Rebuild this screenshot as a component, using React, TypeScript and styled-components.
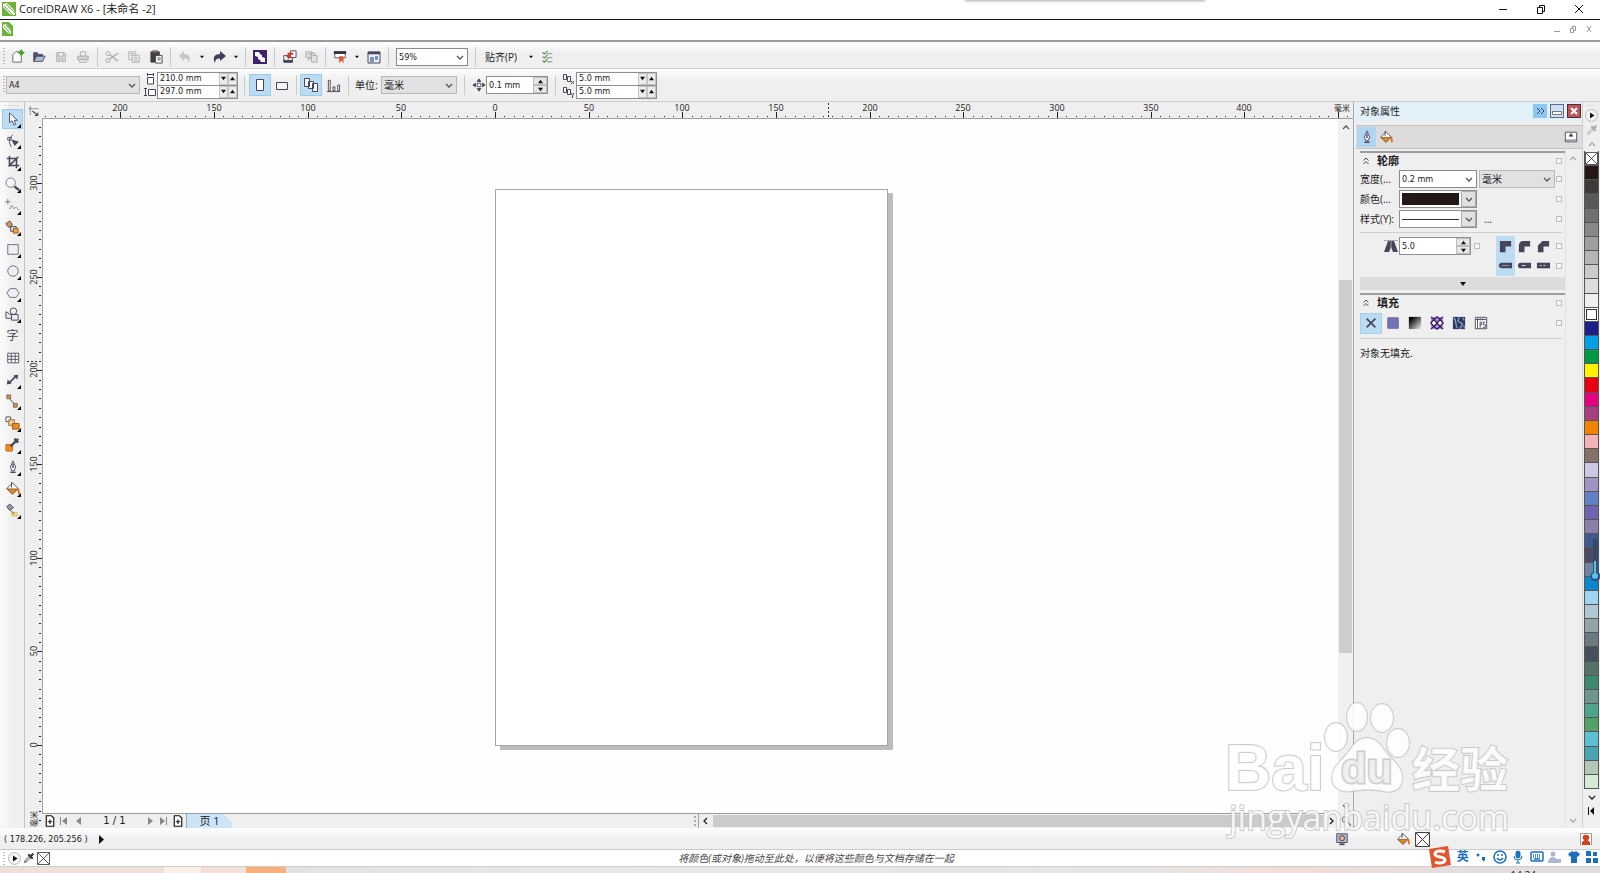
import React from 'react';
import styled, { createGlobalStyle, css } from 'styled-components';

const LATIN = '"DejaVu Sans Condensed", "DejaVu Sans", "Noto Sans CJK SC", sans-serif';
const CJK = '"Open Sans", "Noto Sans CJK SC", sans-serif';

const INK = '#46465a';
const BLUE = '#bcdcf4';

const GlobalStyle = createGlobalStyle`
  * { box-sizing: border-box; }
  body { margin: 0; background: #efefef; color: #1c1c1c; font: 10px/14px ${CJK}; }
  button, input, select { font: inherit; color: inherit; margin: 0; padding: 0; border: 0; background: none; border-radius: 0; outline: none; }
  svg { display: block; flex: none; }
  h2, h3, p { margin: 0; font: inherit; }
`;

/* ---------- layout ---------- */

const Shell = styled.div`
  position: relative;
  display: flex;
  flex-direction: column;
  height: 100vh;
  overflow: hidden;
`;

const TitleBar = styled.header`
  display: flex;
  align-items: center;
  gap: 3px;
  height: 20px;
  padding: 0 16px 2px 2px;
  background: #fff;
  border-bottom: 1px solid #15151a;
  font-size: 11px;
`;

const MenuBar = styled.div`
  display: flex;
  align-items: center;
  height: 22px;
  padding: 0 7px 2px 2px;
  background: #fff;
  border-bottom: 2px solid #9a9a9a;
`;

const Spacer = styled.div`
  flex: 1;
`;

const WindowButtons = styled.div<{ $gap: number }>`
  display: flex;
  align-items: center;
  gap: ${(p) => p.$gap}px;
`;

const PlainButton = styled.button`
  display: flex;
  align-items: center;
  justify-content: center;
`;

const Toolbar = styled.div<{ $height: number; $drop?: number }>`
  display: flex;
  align-items: center;
  height: ${(p) => p.$height}px;
  padding: ${(p) => p.$drop ?? 0}px 0 0 3px;
  background: linear-gradient(#fdfdfd, #efefef 12px);
  border-bottom: 1px solid #cfcfcf;
`;

const Grip = styled.div`
  width: 3px;
  height: 18px;
  background: repeating-linear-gradient(#b5b5b5 0 1px, transparent 1px 3px);
  background-size: 2px 100%;
  background-repeat: no-repeat;
`;

const Divider = styled.div<{ $space?: number; $after?: number }>`
  width: 1px;
  height: 20px;
  margin: 0 ${(p) => p.$after ?? p.$space ?? 3}px 0 ${(p) => p.$space ?? 3}px;
  background: #cbcbcb;
`;

const ToolButton = styled.button<{ $on?: boolean; $dim?: boolean }>`
  display: flex;
  align-items: center;
  justify-content: center;
  width: 22px;
  height: 22px;
  background: ${(p) => (p.$on ? BLUE : 'transparent')};
  border: 1px solid ${(p) => (p.$on ? '#9dcbee' : 'transparent')};
  ${(p) => p.$dim && css`opacity: 0.4;`}
`;

const CaretButton = styled.button`
  display: flex;
  align-items: center;
  justify-content: center;
  width: 12px;
  height: 22px;
`;

const SnapButton = styled(PlainButton)`
  padding-right: 8px;
`;

const SelectWrap = styled.span<{ $width: number; $plain?: boolean; $face?: 'latin' | 'cjk' }>`
  display: flex;
  align-items: center;
  position: relative;
  width: ${(p) => p.$width}px;
  height: 18px;
  flex: none;
  background: ${(p) => (p.$plain ? '#fff' : '#e1e1e1')};
  border: 1px solid ${(p) => (p.$plain ? '#8a8a8a' : '#b9b9b9')};
  font-family: ${(p) => (p.$face === 'cjk' ? CJK : LATIN)};
  font-size: ${(p) => (p.$face === 'cjk' ? 10 : 9)}px;
  select { width: 100%; height: 16px; padding-left: 2px; appearance: none; }
  svg { position: absolute; right: 3px; pointer-events: none; }
`;

const FieldLabel = styled.label<{ $width?: number }>`
  width: ${(p) => (p.$width ? `${p.$width}px` : 'auto')};
  white-space: nowrap;
`;

const PairGrid = styled.div<{ $indent?: number }>`
  display: grid;
  grid-template-columns: 13px 81px;
  grid-auto-rows: 13px;
  align-items: center;
  margin-left: ${(p) => p.$indent ?? 0}px;
`;

const PairField = styled.div`
  display: flex;
  align-items: center;
  height: 14px;
  background: #fff;
  border: 1px solid #8f8f8f;
  font: 9px/11px ${LATIN};
  input { flex: 1; min-width: 0; height: 11px; padding-left: 2px; }
`;

const TinyStep = styled.button`
  display: flex;
  align-items: center;
  justify-content: center;
  width: 9px;
  height: 12px;
  background: #ececec;
  border: 1px solid #c4c4c4;
`;

const StepField = styled.div<{ $width: number }>`
  display: flex;
  align-items: center;
  width: ${(p) => p.$width}px;
  height: 18px;
  flex: none;
  background: #fff;
  border: 1px solid #8f8f8f;
  font: 9px/14px ${LATIN};
  input { flex: 1; min-width: 0; height: 16px; padding-left: 2px; }
`;

const StepStack = styled.div`
  display: grid;
  grid-template-rows: 8px 8px;
  width: 14px;
  button { display: flex; align-items: center; justify-content: center; background: #e6e6e6; border: 1px solid #bdbdbd; }
`;

const Body = styled.main`
  display: flex;
  flex: 1;
  min-height: 0;
`;

const Toolbox = styled.nav`
  width: 25px;
  flex: none;
  padding-top: 3px;
  background: linear-gradient(90deg, #fafafa, #efefef 14px);
  border-right: 1px solid #c3c3c3;
`;

const ToolboxGrip = styled.div`
  height: 3px;
  margin: 0 5px;
  background: repeating-linear-gradient(90deg, #bbb 0 1px, transparent 1px 3px);
  background-size: 100% 1px;
  background-repeat: no-repeat;
`;

const ToolList = styled.div`
  display: grid;
  grid-auto-rows: minmax(0, 1fr);
  height: 413px;
`;

const ToolItem = styled.button<{ $on?: boolean; $fly?: boolean }>`
  position: relative;
  display: flex;
  align-items: center;
  justify-content: center;
  margin: 1px 1px 1px 2px;
  background: ${(p) => (p.$on ? BLUE : 'transparent')};
  border: 1px solid ${(p) => (p.$on ? '#9dcbee' : 'transparent')};
  font: 12px/14px ${CJK};
  color: ${INK};
  ${(p) =>
    p.$fly &&
    css`
      &::after {
        content: '';
        position: absolute;
        right: 1px;
        bottom: 0;
        border: 2px solid #000;
        border-left-color: transparent;
        border-top-color: transparent;
      }
    `}
`;

const Workspace = styled.section`
  display: grid;
  flex: 1;
  min-width: 0;
  grid-template-columns: 17px minmax(0, 1fr) 15px;
  grid-template-rows: 17px minmax(0, 1fr) 14px;
`;

const RulerTop = styled.div`
  grid-column: 2 / 4;
  overflow: hidden;
`;

const RulerLeft = styled.div`
  grid-row: 2 / 4;
  overflow: hidden;
`;

const Corner = styled.div`
  display: flex;
  align-items: center;
  justify-content: center;
`;

const Canvas = styled.div`
  position: relative;
  background: #fefefe;
  border-bottom: 1px solid #9c9c9c;
  border-left: 1px solid #a5a5a5;
  overflow: hidden;
`;

const Sheet = styled.div`
  position: absolute;
  left: 452px;
  top: 70px;
  width: 393px;
  height: 557px;
  background: #fff;
  border: 1px solid #a6a6a6;
  box-shadow: 5px 4px 0 #bdbdbd;
`;

const VScroll = styled.div`
  display: flex;
  flex-direction: column;
  align-items: center;
  background: #f0f0f0;
  padding: 4px 0;
`;

const VThumb = styled.div`
  flex: 371;
  width: 13px;
  background: #cdcdcd;
`;

const Gap = styled.div<{ $grow: number }>`
  flex: ${(p) => p.$grow};
`;

const PageBar = styled.div`
  display: flex;
  align-items: center;
  min-width: 0;
  padding-left: 1px;
`;

const PageNav = styled.div`
  display: flex;
  align-items: center;
  width: 656px;
  height: 14px;
  flex: none;
  border-right: 1px solid #a0a0a0;
`;

const NavButton = styled.button<{ $width: number }>`
  display: flex;
  align-items: center;
  justify-content: center;
  width: ${(p) => p.$width}px;
  height: 14px;
`;

const PageCount = styled.span`
  width: 57px;
  text-align: center;
  font: 10px/14px "DejaVu Sans", sans-serif;
`;

const PageTab = styled.button`
  width: 46px;
  height: 14px;
  margin-left: 1px;
  background: #cce4f7;
  border-left: 1px solid #9ab;
  clip-path: polygon(0 0, 38px 0, 100% 9px, 100% 100%, 0 100%);
  font: 11px/12px ${CJK};
  text-align: center;
`;

const HScroll = styled.div`
  display: flex;
  align-items: center;
  flex: 1;
  height: 14px;
`;

const HThumb = styled.div`
  flex: 1;
  height: 12px;
  background: #cbcbcb;
`;

/* ---------- docker ---------- */

const Docker = styled.aside`
  display: flex;
  flex-direction: column;
  width: 230px;
  flex: none;
  border-left: 1px solid #a8a8a8;
  border-right: 1px solid #d0d0d0;
  padding-left: 2px;
`;

const DockerTitle = styled.div`
  display: flex;
  align-items: center;
  gap: 3px;
  height: 19px;
  padding: 0 1px 1px 4px;
  background: #e2f0fa;
`;

const DockerButton = styled.button<{ $tone: string; $edge: string }>`
  display: flex;
  align-items: center;
  justify-content: center;
  width: 14px;
  height: 14px;
  background: ${(p) => p.$tone};
  border: 1px solid ${(p) => p.$edge};
`;

const DockerTabs = styled.div`
  display: flex;
  align-items: center;
  height: 24px;
  margin-top: 4px;
  padding: 0 4px 0 1px;
  background: #dcdcdc;
  border-top: 1px solid #c2c2c2;
  border-bottom: 1px solid #c2c2c2;
`;

const DockerTab = styled.button<{ $on?: boolean }>`
  display: flex;
  align-items: center;
  justify-content: center;
  width: 19px;
  height: 20px;
  background: ${(p) => (p.$on ? '#afd5f2' : 'transparent')};
`;

const DockerMain = styled.div`
  display: flex;
  flex: 1;
  min-height: 0;
`;

const DockerContent = styled.div`
  flex: 1;
  min-width: 0;
  padding: 2px 0 0 4px;
  border-right: 1px solid #e2e2e2;
`;

const DockerScroll = styled.div`
  display: flex;
  flex-direction: column;
  align-items: center;
  justify-content: space-between;
  width: 16px;
  padding: 5px 2px 4px 0;
`;

const SectionHead = styled.div`
  display: flex;
  align-items: center;
  gap: 8px;
  height: 18px;
  padding: 0 3px;
  border-top: 2px solid #9d9d9d;
  h3 { flex: 1; font: bold 11px/16px ${CJK}; }
`;

const Row = styled.div<{ $height?: number }>`
  display: flex;
  align-items: center;
  height: ${(p) => p.$height ?? 20}px;
  padding-right: 3px;
`;

const UnitGap = styled.span`
  width: 2px;
`;

const MiterIndent = styled.span`
  width: 23px;
`;

const Reset = styled.button<{ $inline?: boolean }>`
  width: 6px;
  height: 6px;
  margin-left: ${(p) => (p.$inline ? '3px' : 'auto')};
  flex: none;
  border: 1px solid #bcbcbc;
  background: #f8f8f8;
`;

const PreviewSelect = styled.button`
  display: flex;
  align-items: center;
  width: 78px;
  height: 18px;
  padding-left: 2px;
  background: #fff;
  border: 1px solid #8f8f8f;
`;

const PreviewFill = styled.span`
  flex: 1;
  height: 12px;
  background: #231815;
`;

const PreviewLine = styled.span`
  flex: 1;
  height: 1px;
  background: #333;
`;

const PreviewArrow = styled.span`
  display: flex;
  align-items: center;
  justify-content: center;
  width: 15px;
  height: 16px;
  margin-left: 2px;
  background: #e1e1e1;
  border: 1px solid #adadad;
`;

const Rule = styled.div`
  height: 1px;
  margin: 3px 3px 3px 0;
  background: #cfcfcf;
`;

const JoinButton = styled.button<{ $on?: boolean }>`
  display: flex;
  align-items: center;
  justify-content: center;
  width: 19px;
  height: 20px;
  background: ${(p) => (p.$on ? BLUE : 'transparent')};
`;

const Expander = styled.button`
  display: flex;
  align-items: center;
  justify-content: center;
  width: 100%;
  height: 13px;
  margin: 2px 0 3px;
  background: #dcdcdc;
`;

const FillButton = styled.button<{ $on?: boolean }>`
  display: flex;
  align-items: center;
  justify-content: center;
  width: 22px;
  height: 21px;
  background: ${(p) => (p.$on ? BLUE : 'transparent')};
  border: 1px solid ${(p) => (p.$on ? '#a5cfee' : 'transparent')};
`;

const Note = styled.p`
  padding-top: 4px;
`;

/* ---------- colour strip ---------- */

const Strip = styled.div`
  position: relative;
  display: flex;
  flex-direction: column;
  align-items: center;
  width: 17px;
  flex: none;
  padding-top: 3px;
`;

const StripGrip = styled(ToolboxGrip)`
  width: 9px;
`;

const StripButton = styled.button<{ $height: number }>`
  display: flex;
  align-items: center;
  justify-content: center;
  width: 15px;
  height: ${(p) => p.$height}px;
`;

const Swatches = styled.div`
  display: grid;
  grid-auto-rows: minmax(0, 1fr);
  width: 15px;
  height: 638px;
  border: 1px solid #555;
  border-top: 0;
`;

const Swatch = styled.button<{ $color: string; $current?: boolean }>`
  min-height: 0;
  background: ${(p) => p.$color};
  border-top: 1px solid #555;
  ${(p) => p.$current && css`box-shadow: inset 0 0 0 1px #fff, inset 0 0 0 2px #333;`}
`;

const Thermometer = styled.svg`
  position: absolute;
  right: 0;
  top: 435px;
`;

/* ---------- bottom ---------- */

const StatusBar = styled.footer`
  display: flex;
  align-items: center;
  height: 22px;
  flex: none;
  padding: 1px 8px 0 4px;
  background: linear-gradient(#fefefe, #efefef 11px);
  border-bottom: 1px solid #cbcbcb;
  font: 9px/12px ${LATIN};
`;

const StatusIcons = styled.div`
  display: flex;
  align-items: center;
  gap: 5px;
  width: 184px;
  margin-left: 47px;
`;

const PaletteBar = styled.div`
  display: flex;
  align-items: center;
  gap: 2px;
  height: 17px;
  flex: none;
  padding: 0 20px 0 3px;
  background: #fff;
  border-bottom: 1px solid #cdcdcd;
`;

const Hint = styled.em`
  flex: 1;
  text-align: center;
  color: #444;
`;

const Taskbar = styled.div`
  display: flex;
  height: 6px;
  flex: none;
  overflow: hidden;
  background: linear-gradient(90deg, #dcdcdc, #e9e9e9 40%, #e6e4e4 72%, #f3dcd8 80%, #e3dede 92%);
`;

const Task = styled.div<{ $width: number; $color: string }>`
  width: ${(p) => p.$width}px;
  background: ${(p) => p.$color};
`;

const Clock = styled.time`
  margin-left: auto;
  margin-right: 64px;
  padding-top: 2px;
  font: 10px/12px ${CJK};
`;

const ImeBar = styled.div`
  position: absolute;
  right: 0;
  bottom: 4px;
  display: flex;
  align-items: center;
  gap: 3px;
  height: 24px;
  width: 172px;
  color: #1a6fc0;
  font: bold 12px/16px ${CJK};
`;

const ImeButton = styled.button`
  display: flex;
  align-items: center;
  justify-content: center;
  width: 16px;
  height: 18px;
`;

const TopShadow = styled.div`
  position: absolute;
  left: 60%;
  top: -6px;
  width: 238px;
  height: 6px;
  margin-left: 6px;
  box-shadow: 0 0 3px 1px #aaa;
`;

const Watermark = styled.svg`
  position: absolute;
  right: 80px;
  bottom: 30px;
  pointer-events: none;
`;

/* ---------- icons ---------- */

const Svg = ({ s = 16, children }: { s?: number; children: React.ReactNode }) => (
  <svg width={s} height={s} viewBox="0 0 16 16" fill="none" stroke={INK} strokeWidth="1">
    {children}
  </svg>
);

const Caret = ({ up, s = 5 }: { up?: boolean; s?: number }) => (
  <svg width={s} height={s} viewBox="0 0 6 6" fill="#111">
    <path d={up ? 'M0 5L3 1L6 5Z' : 'M0 1L3 5L6 1Z'} />
  </svg>
);

const Chevron = ({ dir = 'down', color = '#555', s = 8 }: { dir?: 'up' | 'down' | 'left' | 'right'; color?: string; s?: number }) => {
  const d = { down: 'M1 3L4 6L7 3', up: 'M1 6L4 3L7 6', left: 'M5 1L2 4L5 7', right: 'M3 1L6 4L3 7' }[dir];
  return (
    <svg width={s} height={s} viewBox="0 0 8 8" fill="none" stroke={color} strokeWidth="1.3">
      <path d={d} />
    </svg>
  );
};

const Collapse = () => (
  <svg width="6" height="8" fill="none" stroke={INK}>
    <path d="M.5 3.500L3 1L5.500 3.500M.5 7L3 4.500L5.500 7" />
  </svg>
);

const Logo = ({ doc }: { doc?: boolean }) => (
  <svg width={doc ? 11 : 14} height={14} viewBox={doc ? '0 0 11 14' : '0 0 14 14'}>
    <path d={doc ? 'M0 0H7L11 4V14H0Z' : 'M0 0H14V14H0Z'} fill="#6db33a" />
    <path d={doc ? 'M1 3L4 2L9 8L9 12L6 11L1 6Z' : 'M1 2L5 1L12 8L13 13L8 12L1 5Z'} fill="#fff" />
    <path d={doc ? 'M2 4L8 11M4 3L9 9' : 'M2 4L10 12M4 2L12 10'} stroke="#6db33a" strokeWidth="1" />
  </svg>
);

const Bucket = ({ s = 16 }: { s?: number }) => (
  <Svg s={s}>
    <path d="M2 8L8 2L14 8L8 14Z" fill="#fff" />
    <path d="M2 8.500H13.500L8 14Z" fill="#d98a2b" stroke="#9a5f1c" />
    <path d="M7 1V7" />
    <path d="M14 8L15 14" stroke="#e06a1c" strokeWidth="2" />
  </Svg>
);

const Nib = ({ s = 16 }: { s?: number }) => (
  <Svg s={s}>
    <path d="M8 1L5 8L6.500 12H9.500L11 8Z" fill="#f4f4f8" />
    <path d="M8 4V9M5 14H11" strokeWidth="1.500" />
  </Svg>
);

const Dropper = ({ s = 14, color = '#333' }: { s?: number; color?: string }) => (
  <Svg s={s}>
    <path d="M2 14L3 11L8 6L10 8L5 13Z" fill="#ddd" stroke={color} />
    <path d="M8 4L12 8M10 6L13 3" stroke={color} strokeWidth="3" strokeLinecap="round" />
  </Svg>
);

const CrossBox = ({ s = 14 }: { s?: number }) => (
  <svg width={s} height={s} viewBox="0 0 14 14" fill="#fff" stroke="#333" strokeWidth=".9">
    <path d="M.5 .5H13.500V13.500H.5Z" />
    <path d="M1 1L13 13M13 1L1 13" />
  </svg>
);

const PlayDisc = () => (
  <svg width="13" height="13" viewBox="0 0 13 13">
    <circle cx="6.500" cy="6.500" r="6" fill="#f4f4f4" stroke="#bbb" />
    <path d="M5 3.500L9.500 6.500L5 9.500Z" fill="#111" />
  </svg>
);

const icons = {
  new: (
    <Svg s={15}>
      <path d="M3 14V6L6 3H12V14Z" fill="#fff" stroke="#66667a" />
      <path d="M12 0L13.500 2.500L16 4L13.500 5.500L12 8L10.500 5.500L8 4L10.500 2.500Z" fill="#4aa02c" stroke="none" />
    </Svg>
  ),
  open: (
    <Svg s={14}>
      <path d="M2 13V3H6L7 5H12V8" fill="#4d5578" />
      <path d="M2 13L5 7H15L12 13Z" fill="#a9bcd8" />
    </Svg>
  ),
  save: (
    <Svg s={14}>
      <path d="M3 3H12L13 4V13H3Z" fill="#bbb" />
      <path d="M5 3H11V7H5ZM6 10H10V13H6Z" fill="#eee" />
    </Svg>
  ),
  print: (
    <Svg s={14}>
      <path d="M5 2H11V7H5Z" fill="#eee" />
      <path d="M2 7H14V11H2Z" fill="#aaa" />
      <path d="M4 11H12V14H4Z" fill="#eee" />
    </Svg>
  ),
  cut: (
    <Svg>
      <circle cx="4" cy="4.500" r="2" />
      <circle cx="4" cy="11.500" r="2" />
      <path d="M6 6L14 12M6 10L14 4" strokeWidth="1.500" />
    </Svg>
  ),
  copy: (
    <Svg s={14}>
      <path d="M2 2H10V11H2ZM4 4H8M4 6H8" fill="#eee" />
      <path d="M6 6H14V14H6ZM8 8.500H12M8 10.500H12M8 12.500H12" fill="#eee" />
    </Svg>
  ),
  paste: (
    <Svg s={15}>
      <path d="M2 3H11V14H2Z" fill="#4a3c36" />
      <path d="M4 2H9V4H4Z" fill="#c99b62" />
      <path d="M7 7H14V15H7ZM9 9.500H12.500M9 11.500H12.500" fill="#fff" />
    </Svg>
  ),
  undo: (
    <Svg>
      <path d="M7 2V5C11 5 14 7 12 14C11 10 10 9.500 7 9.500V12L2 7Z" fill="#8a8a98" stroke="none" />
    </Svg>
  ),
  redo: (
    <Svg>
      <path d="M9 2V5C4 5 1 8 4 14C4.500 10 6 9.500 9 9.500V12L15 7Z" fill="#3d4257" stroke="none" />
    </Svg>
  ),
  launch: (
    <Svg>
      <path d="M1 1H15V15H1Z" fill="#43226d" stroke="none" />
      <path d="M3 3H7L8 5L10 6L10 8L13 9V13H9L8 11L6 10V8L3 7Z" fill="#fff" stroke="none" />
      <path d="M3 8L7 12M9 3L13 7" stroke="#43226d" />
    </Svg>
  ),
  import: (
    <Svg s={15}>
      <path d="M9 2H15V9H9Z" fill="#fff" />
      <path d="M2 7H7V9H11V14H2Z" fill="#fff" />
      <path d="M2 12H11V14H2Z" fill="#3d4257" />
      <path d="M12 5H7V8" stroke="#d2342a" strokeWidth="2" />
      <path d="M4 7H10L7 11Z" fill="#d2342a" stroke="none" />
    </Svg>
  ),
  export: (
    <Svg s={15}>
      <path d="M2 3H8V9H2ZM8 7H14V14H8Z" fill="#ccc" />
      <path d="M5 6L10 4L12 6M4 12L7 9" strokeWidth="1.500" />
    </Svg>
  ),
  welcome: (
    <Svg s={14}>
      <path d="M2 2H14V9H2Z" fill="#fff" />
      <path d="M1 3H15" stroke="#2c2c3c" strokeWidth="3" />
      <path d="M7 7H12V15L9.500 12L7 15Z" fill="#e0562a" stroke="none" />
    </Svg>
  ),
  window: (
    <Svg>
      <path d="M2 3H14V14H2Z" fill="#eef" />
      <path d="M2 4H14" strokeWidth="2.500" />
      <path d="M4 8H8V13H4ZM9 7H12V11H9Z" fill="#7b94bd" stroke="none" />
    </Svg>
  ),
  checks: (
    <Svg s={13}>
      <path d="M2 3L4 5L8 1M2 8L4 10L8 6M2 13L4 15L8 11" stroke="#4b8a3c" strokeWidth="1.300" />
      <path d="M7 4.500H14M7 9.500H14M7 14.500H14" stroke="#778" />
    </Svg>
  ),
};

const tools: { name: string; on?: boolean; fly?: boolean; icon: React.ReactNode }[] = [
  { name: '选择', on: true, fly: true, icon: <Svg s={14}><path d="M4 1V12L7 10L9 15L11 14L9.500 9.500H13Z" fill="#fff" /></Svg> },
  { name: '形状', fly: true, icon: <Svg s={14}><path d="M8 1C3 4 3 9 6 15M2 4H6V7H2Z" /><path d="M7 7L14 9L10 13Z" fill={INK} /></Svg> },
  { name: '裁剪', fly: true, icon: <Svg s={14}><path d="M4 1V12H15M1 4H12V15M3 13L14 2" strokeWidth="1.800" /></Svg> },
  { name: '缩放', fly: true, icon: <Svg s={15}><circle cx="6" cy="6" r="5" fill="#f4f6fa" stroke="#77778a" /><path d="M10 10L15 14" strokeWidth="2.500" /></Svg> },
  { name: '手绘', fly: true, icon: <Svg s={15}><path d="M3 1V7M0 4H6M5 12C7 6 8 8 9 11C10 13 11 8 13 11L15 13" stroke="#77778a" /></Svg> },
  { name: '智能填充', fly: true, icon: <Svg s={15}><path d="M1 4L5 1L8 5L4 8Z" fill="#d99a55" /><path d="M6 7H12V12H6Z" fill="#ddd" /><path d="M9 9H14V14H9Z" fill="#f0a03c" stroke="#9c5c20" /></Svg> },
  { name: '矩形', fly: true, icon: <Svg s={14}><path d="M2 3H14V14H2Z" fill="#eeeef4" stroke="#66667a" /></Svg> },
  { name: '椭圆', fly: true, icon: <Svg s={14}><circle cx="8" cy="8" r="6" fill="#eeeef4" stroke="#66667a" /></Svg> },
  { name: '多边形', fly: true, icon: <Svg s={14}><path d="M4.500 3H11.500L15 8L11.500 13H4.500L1 8Z" fill="#eeeef4" stroke="#66667a" /></Svg> },
  { name: '基本形状', fly: true, icon: <Svg s={15}><path d="M1 5V12H7V9Z" fill="#eeeef4" /><circle cx="9" cy="4.500" r="3.500" fill="#eee" /><path d="M7 8H14V14H7Z" fill="#eeeef4" /></Svg> },
  { name: '文本', icon: '字' },
  { name: '表格', icon: <Svg s={14}><path d="M2 2.500H14.500V13.500H2ZM2 6H14M2 9.500H14M6 3V13M10.500 3V13" fill="#fff" /></Svg> },
  { name: '度量', fly: true, icon: <Svg s={13}><path d="M3 13L13 3" strokeWidth="2" /><path d="M1 14L2 8L7 13ZM15 2L14 8L9 3Z" fill={INK} stroke="none" /></Svg> },
  { name: '连接器', fly: true, icon: <Svg s={15}><path d="M4 4L11 12" /><path d="M2 1H6V5H2ZM9 10H13V14H9Z" fill="#c99a6a" stroke="#8a6038" /></Svg> },
  { name: '调和', fly: true, icon: <Svg s={15}><path d="M1 1H6V6H1Z" fill="#fff" /><path d="M4 4H10V10H4Z" fill="#f2cf9c" stroke="#a2682c" /><path d="M8 8H15V14H8Z" fill="#ef8a1c" stroke="#a2581c" /></Svg> },
  { name: '颜色滴管', fly: true, icon: <Svg s={15}><path d="M1 8H8V15H1Z" fill="#ef8a1c" stroke="#c96a10" /><path d="M6 10L12 4M10 2L14 6M12 4L14 2" strokeWidth="2.500" /></Svg> },
  { name: '轮廓笔', fly: true, icon: <Nib s={14} /> },
  { name: '填充', fly: true, icon: <Bucket s={15} /> },
  { name: '交互式填充', fly: true, icon: <Svg s={15}><path d="M2 4L5 1L9 5L5 8Z" fill="#99a" /><path d="M7 10H13V14H7Z" fill="#f3d88c" stroke="#e2c26c" /><path d="M6 8L10 12" /></Svg> },
];

const swatches = (
  '231815 3e3a39 595757 727171 898989 9fa0a0 b5b5b6 c9caca dcdddd efefef ffffff 1d2088 00a0e9 009944 fff100 e60012 e4007f a83f80 ' +
  'f08300 f5b2b5 847066 ccc8e4 a094c5 6480c4 7263ae 8a7fa8 3f5a8e 4e4a66 6f84a5 0f86cc 9fd5f3 afc6d3 94a4a8 6b7a82 455059 ' +
  '54716a 3c8b6f 6f9590 4da58c 55a064 5cbfd3 4aa5b2 b2c9b7 d5ead6'
).split(' ');

/* ---------- rulers ---------- */

const PX_PER_MM = 1.873;

const range = (from: number, to: number, step: number) => {
  const out: number[] = [];
  for (let v = from; v <= to; v += step) out.push(v);
  return out;
};

const HRuler = () => {
  const at = (mm: number) => Math.round(453 + mm * PX_PER_MM);
  return (
    <svg width="100%" height="17" fill="#222" fontFamily="Open Sans, sans-serif" fontSize="9">
      <rect y="16" width="100%" height="1" fill="#9c9c9c" />
      {range(-240, 455, 5).map((mm) => (
        <rect key={mm} x={at(mm)} y={mm % 50 ? 14 : 10} width="1" height={mm % 50 ? 1 : 6} />
      ))}
      {range(-200, 400, 50).map((mm) => (
        <text key={mm} x={at(mm)} y="9" textAnchor="middle">{Math.abs(mm)}</text>
      ))}
      <path d="M786.500 1V16" stroke="#333" strokeDasharray="2 2" />
      <text x={at(450) + 4} y="9" textAnchor="middle" fontFamily="Noto Sans CJK SC, sans-serif" fontSize="8">毫米</text>
    </svg>
  );
};

const VRuler = () => {
  const at = (mm: number) => Math.round(626 - mm * PX_PER_MM);
  return (
    <svg width="17" height="100%" fill="#222" fontFamily="Open Sans, sans-serif" fontSize="9">
      {range(-40, 330, 5).map((mm) => (
        <rect key={mm} x={mm % 50 ? 14 : 12} y={at(mm)} width={mm % 50 ? 2 : 5} height="1" />
      ))}
      {range(0, 300, 50).map((mm) => (
        <text key={mm} x="0" y="0" textAnchor="middle" transform={`translate(12 ${at(mm)}) rotate(-90)`}>{mm}</text>
      ))}
      <path d="M2 242.500H16" stroke="#333" strokeDasharray="2 2" />
      <text textAnchor="middle" transform="translate(12 700) rotate(-90)" fontFamily="Noto Sans CJK SC, sans-serif" fontSize="8">毫米</text>
    </svg>
  );
};

/* ---------- controls ---------- */

const Tool = ({ name, icon, on, dim }: { name: string; icon: React.ReactNode; on?: boolean; dim?: boolean }) => (
  <ToolButton aria-label={name} $on={on} $dim={dim}>{icon}</ToolButton>
);

const Drop = ({ name, width, value, plain, face, id }: { name: string; width: number; value: string; plain?: boolean; face?: 'latin' | 'cjk'; id?: string }) => (
  <SelectWrap $width={width} $plain={plain} $face={face}>
    <select id={id} aria-label={name} defaultValue={value}>
      <option>{value}</option>
    </select>
    <Chevron />
  </SelectWrap>
);

const Pair = ({ items, indent }: { items: { name: string; value: string; icon: React.ReactNode }[]; indent?: number }) => (
  <PairGrid $indent={indent}>
    {items.map((i) => (
      <React.Fragment key={i.name}>
        {i.icon}
        <PairField>
          <input aria-label={i.name} defaultValue={i.value} />
          <TinyStep aria-label={`${i.name}减`}><Caret /></TinyStep>
          <TinyStep aria-label={`${i.name}加`}><Caret up /></TinyStep>
        </PairField>
      </React.Fragment>
    ))}
  </PairGrid>
);

const Step = ({ name, value, width }: { name: string; value: string; width: number }) => (
  <StepField $width={width}>
    <input aria-label={name} defaultValue={value} />
    <StepStack>
      <button aria-label={`${name}加`}><Caret up /></button>
      <button aria-label={`${name}减`}><Caret /></button>
    </StepStack>
  </StepField>
);

const DupIcon = ({ axis }: { axis: string }) => (
  <svg width="12" height="12" viewBox="0 0 12 12" fill="#fff" stroke={INK}>
    <path d="M.5 1.500H3.500V6.500H.5ZM4.500 3.500H7.500V8.500H4.500Z" />
    <path d={axis === 'x' ? 'M8 8L11 11M11 8L8 11' : 'M8 7L9.500 9.500L11 7M9.500 9.500V12'} />
  </svg>
);

const fills: { name: string; on?: boolean; icon: React.ReactNode }[] = [
  { name: '无填充', on: true, icon: <Svg s={14}><path d="M3 3L13 13M13 3L3 13" strokeWidth="2" /></Svg> },
  { name: '均匀填充', icon: <Svg s={14}><path d="M2 2H14V14H2Z" fill="#7472b4" stroke="#62609c" /></Svg> },
  {
    name: '渐变填充',
    icon: (
      <Svg s={14}>
        <defs>
          <linearGradient id="fade" x1="0" y1="0" x2="1" y2="1">
            <stop offset=".15" stopColor="#000" />
            <stop offset="1" stopColor="#f0f0f0" />
          </linearGradient>
        </defs>
        <path d="M1 1H15V15H1Z" fill="url(#fade)" stroke="none" />
      </Svg>
    ),
  },
  {
    name: '图样填充',
    icon: (
      <Svg s={14}>
        <path d="M1 1H15V15H1Z" fill="#b08fe0" stroke="none" />
        <path d="M4.500 4L8 8L4.500 12L1 8ZM11.500 4L15 8L11.500 12L8 8Z" fill="#fff" stroke="#34205c" strokeWidth="1.500" />
        <path d="M1 1L4.500 4L8 1L11.500 4L15 1M1 15L4.500 12L8 15L11.500 12L15 15" stroke="#34205c" strokeWidth="1.500" />
      </Svg>
    ),
  },
  {
    name: '底纹填充',
    icon: (
      <Svg s={14}>
        <path d="M1 1H15V15H1Z" fill="#2c3a62" stroke="none" />
        <path d="M2 2C6 6 3 9 6 14M8 1L7 6L12 9L9 15M12 2L14 5M13 11L15 14" stroke="#8f9dc2" strokeWidth="1.500" />
      </Svg>
    ),
  },
  {
    name: 'PostScript 填充',
    icon: (
      <Svg s={14}>
        <path d="M1.500 1.500H14.500V14.500H1.500ZM2 4H14M4 2V14M7 2V5M10 2V5" fill="#fff" />
        <path d="M7 14V7H9V10H7M13 7H11V10H13V13H10" />
      </Svg>
    ),
  },
];

const BaiduMark = () => (
  <Watermark width="300" height="150" viewBox="-8 0 300 150" fill="#fff" fillOpacity="0.85" stroke="#c0c0c0" strokeOpacity="0.8" strokeWidth="2" paintOrder="stroke">
    <ellipse cx="108" cy="44" rx="11" ry="14" />
    <ellipse cx="129" cy="24" rx="10" ry="14" />
    <ellipse cx="154" cy="25" rx="11" ry="14" />
    <ellipse cx="170" cy="50" rx="11" ry="14" />
    <path d="M139 45C150 45 154 55 161 63C169 71 176 78 174 88C172 98 163 100 155 98C145 96 134 96 124 98C113 100 104 95 104 85C104 75 111 70 118 62C124 55 128 45 139 45Z" />
    <text x="-3" y="97" fontFamily="Liberation Sans, sans-serif" fontWeight="700" fontSize="64">Bai</text>
    <text x="113" y="90" fontFamily="Liberation Sans, sans-serif" fontWeight="700" fontSize="42" strokeWidth="3" fill="#f0f0f0">du</text>
    <text x="184" y="94" fontFamily="Noto Sans CJK SC, sans-serif" fontWeight="700" fontSize="48">经验</text>
    <text x="1" y="137" fontFamily="Open Sans, sans-serif" fontSize="34">jingyanbaidu.com</text>
  </Watermark>
);

export default function App() {
  return (
    <Shell>
      <GlobalStyle />
      <TitleBar>
        <Logo />
        <span>CorelDRAW X6 - [未命名 -2]</span>
        <Spacer />
        <WindowButtons $gap={28}>
          <PlainButton aria-label="最小化"><svg width="10" height="10" stroke="#111"><path d="M1 5.500H9" /></svg></PlainButton>
          <PlainButton aria-label="还原"><svg width="10" height="10" stroke="#111" fill="none"><path d="M1.500 3.500H6.500V9.500H1.500ZM3.500 3V1.500H8.500V7.500H7" /></svg></PlainButton>
          <PlainButton aria-label="关闭"><svg width="10" height="10" stroke="#111"><path d="M1 1L9 9M9 1L1 9" /></svg></PlainButton>
        </WindowButtons>
      </TitleBar>
      <MenuBar>
        <Logo doc />
        <Spacer />
        <WindowButtons $gap={8}>
          <PlainButton aria-label="最小化文档"><svg width="8" height="8" stroke="#999"><path d="M1 6.500H7" /></svg></PlainButton>
          <PlainButton aria-label="还原文档"><svg width="8" height="8" stroke="#999" fill="none"><path d="M1.500 3.500H4.500V7.500H1.500ZM3 3V1.500H6.500V5.500H5" /></svg></PlainButton>
          <PlainButton aria-label="关闭文档"><svg width="8" height="8" stroke="#999"><path d="M2 1L6 7M6 1L2 7" /></svg></PlainButton>
        </WindowButtons>
      </MenuBar>

      <Toolbar $height={27} $drop={3}>
        <Grip />
        <Tool name="新建" icon={icons.new} />
        <Tool name="打开" icon={icons.open} />
        <Tool name="保存" icon={icons.save} dim />
        <Tool name="打印" icon={icons.print} dim />
        <Divider />
        <Tool name="剪切" icon={icons.cut} dim />
        <Tool name="复制" icon={icons.copy} dim />
        <Tool name="粘贴" icon={icons.paste} />
        <Divider />
        <Tool name="撤消" icon={icons.undo} dim />
        <CaretButton aria-label="撤消列表"><Caret s={4} /></CaretButton>
        <Tool name="重做" icon={icons.redo} />
        <CaretButton aria-label="重做列表"><Caret s={4} /></CaretButton>
        <Divider />
        <Tool name="搜索内容" icon={icons.launch} />
        <Divider />
        <Tool name="导入" icon={icons.import} />
        <Tool name="导出" icon={icons.export} dim />
        <Divider />
        <Tool name="应用程序启动器" icon={icons.welcome} />
        <CaretButton aria-label="应用程序列表"><Caret s={4} /></CaretButton>
        <Tool name="欢迎屏幕" icon={icons.window} />
        <Divider $after={7} />
        <Drop name="缩放级别" width={72} value="59%" plain />
        <Divider $space={7} $after={9} />
        <SnapButton>贴齐(P)</SnapButton>
        <CaretButton aria-label="贴齐列表"><Caret s={4} /></CaretButton>
        <Tool name="选项" icon={icons.checks} />
      </Toolbar>

      <Toolbar $height={33}>
        <Grip />
        <Drop name="页面大小" width={134} value="A4" />
        <Pair
          indent={4}
          items={[
            { name: '页面宽度', value: '210.0 mm', icon: <svg width="12" height="12" fill="#fff" stroke={INK}><path d="M3.500 4.500H9.500V11H3.500ZM3 1.500H10M3.500 0V3M9.500 0V3" /></svg> },
            { name: '页面高度', value: '297.0 mm', icon: <svg width="12" height="12" fill="#fff" stroke={INK}><path d="M4.500 3.500H11.500V9.500H4.500ZM1.500 2V10M0 2.500H3M0 9.500H3" /></svg> },
          ]}
        />
        <Divider $space={6} $after={4} />
        <Tool name="纵向" on icon={<Svg><path d="M4.500 2.500H11.500V13.500H4.500Z" fill="#fff" /></Svg>} />
        <Tool name="横向" icon={<Svg><path d="M2.500 5.500H13.500V12.500H2.500Z" fill="#f4f4f8" /></Svg>} />
        <Divider />
        <Tool name="所有页面" on icon={<Svg><path d="M1.500 1.500H6.500V9.500H1.500ZM5.500 4.500H10.500V11.500H5.500ZM9.500 6.500H14.500V14.500H9.500Z" fill="#fff" /></Svg>} />
        <Tool name="当前页" icon={<Svg s={15}><path d="M2.500 2.500H4.500V13.500H2.500ZM7.500 9.500H9.500V13.500H7.500ZM12.500 7.500H14.500V13.500H12.500ZM1 14.500H15" fill="#fff" /></Svg>} />
        <Divider $space={4} $after={6} />
        <FieldLabel $width={26} htmlFor="unit">单位:</FieldLabel>
        <Drop id="unit" name="单位" width={76} value="毫米" face="cjk" />
        <Divider $space={7} />
        <Svg s={14}>
          <path d="M8 1L10 4H6ZM8 15L10 12H6ZM1 8L4 6V10ZM15 8L12 6V10Z" fill={INK} />
          <path d="M6 6H10V10H6Z" fill="#fff" />
        </Svg>
        <Step name="微调距离" value="0.1 mm" width={62} />
        <Divider $space={7} />
        <Pair
          items={[
            { name: '再制水平距离', value: '5.0 mm', icon: <DupIcon axis="x" /> },
            { name: '再制垂直距离', value: '5.0 mm', icon: <DupIcon axis="y" /> },
          ]}
        />
      </Toolbar>

      <Body>
        <Toolbox aria-label="工具箱">
          <ToolboxGrip />
          <ToolList>
            {tools.map((t) => (
              <ToolItem key={t.name} aria-label={t.name} $on={t.on} $fly={t.fly}>{t.icon}</ToolItem>
            ))}
          </ToolList>
        </Toolbox>

        <Workspace>
          <Corner>
            <Svg s={12}><path d="M3 2V14M1 5H14" strokeDasharray="2 1" /><path d="M6 8L13 14M13 10V14H9" strokeWidth="1.500" /></Svg>
          </Corner>
          <RulerTop><HRuler /></RulerTop>
          <RulerLeft><VRuler /></RulerLeft>
          <Canvas><Sheet /></Canvas>
          <VScroll>
            <Chevron dir="up" />
            <Gap $grow={149} />
            <VThumb />
            <Gap $grow={149} />
            <Chevron />
          </VScroll>
          <PageBar>
            <PageNav>
              <NavButton $width={13} aria-label="在前面添加页"><Svg s={12}><path d="M3 1H10L13 4V15H3ZM5 9H11M8 6V12" fill="#fff" stroke="#111" strokeWidth="1.500" /></Svg></NavButton>
              <NavButton $width={15} aria-label="第一页"><svg width="8" height="8" fill="#888"><path d="M0 0H1V8H0ZM7 0V8L2 4Z" /></svg></NavButton>
              <NavButton $width={15} aria-label="上一页"><svg width="6" height="8" fill="#888"><path d="M5 0V8L0 4Z" /></svg></NavButton>
              <PageCount>1 / 1</PageCount>
              <NavButton $width={14} aria-label="下一页"><svg width="6" height="8" fill="#888"><path d="M1 0V8L6 4Z" /></svg></NavButton>
              <NavButton $width={14} aria-label="最后一页"><svg width="8" height="8" fill="#888"><path d="M6 0H7V8H6ZM0 0V8L5 4Z" /></svg></NavButton>
              <NavButton $width={14} aria-label="在后面添加页"><Svg s={12}><path d="M3 1H10L13 4V15H3ZM5 9H11M8 6V12" fill="#fff" stroke="#111" strokeWidth="1.500" /></Svg></NavButton>
              <PageTab>页 1</PageTab>
              <Spacer />
              <svg width="4" height="10" fill="#aaa"><path d="M0 0H2V2H0ZM0 4H2V6H0ZM0 8H2V10H0Z" /></svg>
            </PageNav>
            <HScroll>
              <NavButton $width={14} aria-label="向左滚动"><Chevron dir="left" color="#222" /></NavButton>
              <HThumb />
              <NavButton $width={15} aria-label="向右滚动"><Chevron dir="right" color="#222" /></NavButton>
            </HScroll>
          </PageBar>
          <Corner>
            <Svg s={12}><circle cx="7" cy="6" r="4" /><path d="M10 9L14 14" strokeWidth="2" /></Svg>
          </Corner>
        </Workspace>

        <Docker aria-label="对象属性">
          <DockerTitle>
            <h2>对象属性</h2>
            <Spacer />
            <DockerButton aria-label="折叠" $tone="#8cc6f2" $edge="#8cc6f2">
              <svg width="9" height="8" fill="none" stroke={INK}><path d="M1 1L4 4L1 7M5 1L8 4L5 7" /></svg>
            </DockerButton>
            <DockerButton aria-label="最小化面板" $tone="#cfe0f2" $edge="#5e6c8c">
              <svg width="10" height="8" fill="#fff" stroke="#777"><path d="M.5 4.500H9.500V7.500H.5Z" /></svg>
            </DockerButton>
            <DockerButton aria-label="关闭面板" $tone="#b85858" $edge="#5a2a2a">
              <svg width="8" height="8" stroke="#fff" strokeWidth="2"><path d="M1 1L7 7M7 1L1 7" /></svg>
            </DockerButton>
          </DockerTitle>
          <DockerTabs>
            <DockerTab $on aria-label="轮廓"><Nib s={14} /></DockerTab>
            <DockerTab aria-label="填充"><Bucket s={14} /></DockerTab>
            <Spacer />
            <PlainButton aria-label="滚动模式">
              <Svg s={14}><path d="M1.500 2.500H14.500V13.500H1.500ZM2 11.500H14" fill="#fff" /><path d="M8 4L10 7H6Z" fill={INK} /></Svg>
            </PlainButton>
          </DockerTabs>
          <DockerMain>
            <DockerContent>
              <SectionHead>
                <Collapse />
                <h3>轮廓</h3>
                <Reset aria-label="重置轮廓" />
              </SectionHead>
              <Row>
                <FieldLabel $width={39} htmlFor="width">宽度(...</FieldLabel>
                <Drop id="width" name="宽度" width={78} value="0.2 mm" plain />
                <UnitGap />
                <Drop name="宽度单位" width={76} value="毫米" face="cjk" />
                <Reset aria-label="重置宽度" />
              </Row>
              <Row>
                <FieldLabel $width={39} htmlFor="color">颜色(...</FieldLabel>
                <PreviewSelect id="color"><PreviewFill /><PreviewArrow><Chevron /></PreviewArrow></PreviewSelect>
                <Reset aria-label="重置颜色" />
              </Row>
              <Row>
                <FieldLabel $width={39} htmlFor="style">样式(Y):</FieldLabel>
                <PreviewSelect id="style"><PreviewLine /><PreviewArrow><Chevron /></PreviewArrow></PreviewSelect>
                <NavButton $width={22} aria-label="设置">...</NavButton>
                <Reset aria-label="重置样式" />
              </Row>
              <Rule />
              <Row>
                <MiterIndent />
                <Svg><path d="M1 2.500H15" stroke="#aaa" /><path d="M5 3H11L15 14H10L8 9L6 14H1Z" fill={INK} stroke="none" /><path d="M8 3V10" stroke="#999" /></Svg>
                <Step name="斜接限制" value="5.0" width={72} />
                <Reset $inline aria-label="重置斜接" />
                <Spacer />
                <JoinButton $on aria-label="斜接角"><Svg s={15}><path d="M2 2H14V8H8V14H2Z" fill={INK} stroke="none" /></Svg></JoinButton>
                <JoinButton aria-label="圆角"><Svg s={15}><path d="M7 2H14V8H8V14H2V7Q2 2 7 2Z" fill={INK} stroke="none" /></Svg></JoinButton>
                <JoinButton aria-label="斜切角"><Svg s={15}><path d="M7 2H14V8H8V14H2V7Z" fill={INK} stroke="none" /></Svg></JoinButton>
                <Reset $inline aria-label="重置角" />
              </Row>
              <Row $height={19}>
                <Spacer />
                <JoinButton $on aria-label="方形端头"><Svg s={15}><path d="M3 5H15V11H3L1 9V7Z" fill={INK} stroke="none" /><path d="M4 8H12" stroke="#99a" /></Svg></JoinButton>
                <JoinButton aria-label="圆形端头"><Svg s={15}><path d="M4 5H15V11H4A3 3 0 0 1 4 5Z" fill={INK} stroke="none" /><path d="M5 8H9" stroke="#ddd" /></Svg></JoinButton>
                <JoinButton aria-label="延伸端头"><Svg s={15}><path d="M1 5H15V11H1Z" fill={INK} stroke="none" /><path d="M4 8H6M8 8H10" stroke="#ddd" /></Svg></JoinButton>
                <Reset $inline aria-label="重置端头" />
              </Row>
              <Expander aria-label="更多"><Caret s={6} /></Expander>
              <SectionHead>
                <Collapse />
                <h3>填充</h3>
                <Reset aria-label="重置填充" />
              </SectionHead>
              <Row $height={24}>
                {fills.map((f) => (
                  <FillButton key={f.name} aria-label={f.name} $on={f.on}>{f.icon}</FillButton>
                ))}
                <Reset aria-label="重置填充类型" />
              </Row>
              <Rule />
              <Note>对象无填充.</Note>
            </DockerContent>
            <DockerScroll>
              <Chevron dir="up" color="#aaa" />
              <Chevron color="#aaa" />
            </DockerScroll>
          </DockerMain>
        </Docker>

        <Strip>
          <StripGrip />
          <StripButton $height={14} aria-label="调色板菜单"><PlayDisc /></StripButton>
          <StripButton $height={15} aria-label="滴管"><Dropper s={12} color="#aaa" /></StripButton>
          <StripButton $height={14} aria-label="向上"><Chevron dir="up" color="#aaa" /></StripButton>
          <Swatches>
            <PlainButton aria-label="无色"><CrossBox s={13} /></PlainButton>
            {swatches.map((c) => (
              <Swatch key={c} aria-label={`#${c}`} $color={`#${c}`} $current={c === 'ffffff'} />
            ))}
          </Swatches>
          <StripButton $height={15} aria-label="向下"><Chevron color="#222" /></StripButton>
          <StripButton $height={13} aria-label="展开"><svg width="7" height="8" fill="#111"><path d="M0 0H1V8H0ZM6 0V8L2 4Z" /></svg></StripButton>
          <Thermometer width="10" height="46" viewBox="0 0 10 46">
            <path d="M3 4A2 2 0 0 1 8 4V35A5 5 0 1 1 3 35Z" fill="#34466a" fillOpacity="0.85" />
            <path d="M4 24H6V37H4Z" fill="#4fc4ec" />
            <circle cx="5" cy="39" r="3" fill="#4fc4ec" />
          </Thermometer>
        </Strip>
      </Body>

      <StatusBar>
        <span>( 178.226, 205.256 )</span>
        <NavButton $width={28} aria-label="详细信息"><svg width="5" height="9" fill="#111"><path d="M0 0L5 4.500L0 9Z" /></svg></NavButton>
        <Spacer />
        <Svg s={14}><path d="M2 2H14V12H2Z" fill="#b7b7cc" /><circle cx="8" cy="7" r="3" fill="#d9b0a0" /><path d="M5 14H11" strokeWidth="2" /></Svg>
        <StatusIcons>
          <Bucket s={14} />
          <CrossBox s={15} />
        </StatusIcons>
        <svg width="12" height="12" fill="#fff" stroke="#999"><path d="M.5 .5H11.500V12H.5Z" /><path d="M6 2A2.500 2.500 0 0 1 7.500 7L10 9V12H2V9L4.500 7A2.500 2.500 0 0 1 6 2Z" fill="#d0451e" stroke="none" /></svg>
      </StatusBar>
      <PaletteBar>
        <Grip />
        <PlayDisc />
        <Dropper s={12} />
        <CrossBox s={13} />
        <Hint>将颜色(或对象)拖动至此处，以便将这些颜色与文档存储在一起</Hint>
      </PaletteBar>
      <Taskbar>
        <Task $width={164} $color="#f1dfd9" />
        <Task $width={37} $color="#faeee8" />
        <Task $width={45} $color="#f2e0d9" />
        <Task $width={40} $color="#fbb07c" />
        <Clock>14:24</Clock>
      </Taskbar>

      <TopShadow />
      <BaiduMark />
      <ImeBar>
        <svg width="24" height="24" viewBox="0 0 24 24">
          <path d="M1 4L20 1L23 20L4 23Z" fill="#e2562c" />
          <path d="M17 7C12 5 7 6 7 9C7 13 17 11 17 15C17 18 11 19 7 17" fill="none" stroke="#fff" strokeWidth="3" />
        </svg>
        <ImeButton>英</ImeButton>
        <ImeButton aria-label="标点"><svg width="10" height="10" fill="#1a6fc0"><circle cx="2" cy="3" r="1.500" /><path d="M6 5H9V8L7 10V8H6Z" /></svg></ImeButton>
        <ImeButton aria-label="表情"><svg width="14" height="14" fill="none" stroke="#1a6fc0" strokeWidth="1.500"><circle cx="7" cy="7" r="6" /><path d="M5 4V6M9 4V6M4 8Q7 12 10 8" /></svg></ImeButton>
        <ImeButton aria-label="语音"><svg width="12" height="14" fill="#1a6fc0" stroke="#1a6fc0"><rect x="4" y="1" width="4" height="7" rx="2" /><path d="M2 6Q2 10 6 10Q10 10 10 6M6 10V13M4 13H8" fill="none" /></svg></ImeButton>
        <ImeButton aria-label="键盘"><svg width="14" height="12" fill="none" stroke="#1a6fc0" strokeWidth="1.500"><rect x="1" y="1" width="12" height="9" rx="1" /><path d="M3 4H11M3 6H11" strokeDasharray="1 1" /><path d="M4 8H10" /></svg></ImeButton>
        <ImeButton aria-label="账户"><svg width="14" height="12" fill="#a9b8cc"><circle cx="5" cy="3" r="2.500" /><path d="M0 11Q1 6 5 6Q8 6 8 8H13V12H0Z" /></svg></ImeButton>
        <ImeButton aria-label="皮肤"><svg width="12" height="12" fill="#1a6fc0"><path d="M0 3L4 0Q6 2 8 0L12 3L10 6L9 5V12H3V5L2 6Z" /></svg></ImeButton>
        <ImeButton aria-label="工具"><svg width="12" height="12" fill="#1a6fc0"><path d="M0 0H5V5H0ZM7 1H11V5H7ZM0 7H5V12H0ZM7 7H12V12H7Z" /></svg></ImeButton>
      </ImeBar>
    </Shell>
  );
}
